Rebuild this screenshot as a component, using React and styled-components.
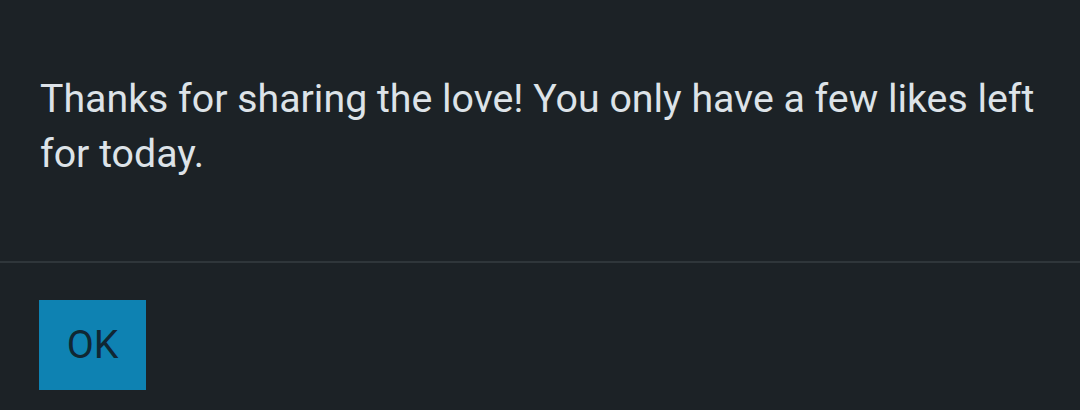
import React from 'react';
import styled, { createGlobalStyle } from 'styled-components';

const GlobalStyle = createGlobalStyle`
  html, body {
    margin: 0;
    padding: 0;
    background: #1c2226;
  }
  body {
    font-family: Roboto, "Noto Sans", sans-serif;
  }
`;

const Dialog = styled.div`
  width: 1080px;
  height: 410px;
  background: #1c2226;
  display: flex;
  flex-direction: column;
  overflow: hidden;
`;

const Body = styled.div`
  padding: 72px 40px 79px 40px;
`;

const Message = styled.p`
  margin: 0;
  font-size: 39.3px;
  line-height: 55px;
  color: #dde3e8;
`;

const Divider = styled.div`
  flex: none;
  height: 2px;
  background: #2f363a;
`;

const Actions = styled.div`
  display: flex;
  padding: 37px 39px;
`;

const Button = styled.button`
  width: 107px;
  height: 90px;
  border: none;
  border-radius: 0;
  background: #0e82b2;
  color: #102733;
  font-family: Roboto, "Noto Sans", sans-serif;
  font-size: 39.3px;
  padding: 0;
  cursor: pointer;
`;

export default function App() {
  return (
    <>
      <GlobalStyle />
      <Dialog>
        <Body>
          <Message>
            Thanks for sharing the love! You only have a few likes left for today.
          </Message>
        </Body>
        <Divider />
        <Actions>
          <Button>OK</Button>
        </Actions>
      </Dialog>
    </>
  );
}
